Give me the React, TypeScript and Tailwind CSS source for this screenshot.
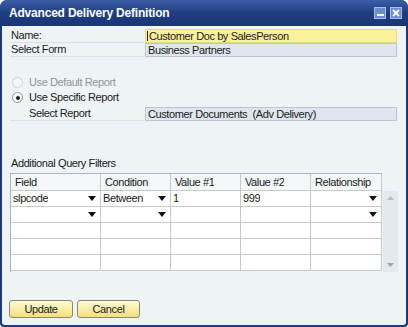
import React from "react";

const Arrow = () => (
  <svg width="8" height="5" viewBox="0 0 8 5" className="shrink-0">
    <polygon points="0,0 8,0 4,5" fill="#111" />
  </svg>
);

const cols = [90, 70, 70, 70, 71];

function Cell({ w, text, arrow, header }: { w: number; text?: string; arrow?: boolean; header?: boolean }) {
  return (
    <div
      style={{ width: w }}
      className={`flex items-center justify-between pl-[2px] pr-[4px] border-r border-b border-[#c4cace] ${header ? "bg-[#f3f7f8] pl-[4px]" : "bg-white"}`}
    >
      <span className="truncate">{text}</span>
      {arrow ? <Arrow /> : null}
    </div>
  );
}

export default function App() {
  const rows: { t: string[]; a: boolean[] }[] = [
    { t: ["slpcode", "Between", "1", "999", ""], a: [true, true, false, false, true] },
    { t: ["", "", "", "", ""], a: [true, true, false, false, true] },
    { t: ["", "", "", "", ""], a: [false, false, false, false, false] },
    { t: ["", "", "", "", ""], a: [false, false, false, false, false] },
    { t: ["", "", "", "", ""], a: [false, false, false, false, false] },
  ];
  return (
    <div className="w-[408px] h-[327px] bg-[#1d3a7c] rounded-t-[7px] rounded-b-[4px] flex flex-col font-['Liberation_Sans',Arial,sans-serif] text-[11px] tracking-[-0.4px] text-[#1a1a1a] overflow-hidden">
      {/* Title bar */}
      <div className="h-[26px] shrink-0 flex items-center justify-between pl-[9px] pr-[6px] bg-gradient-to-b from-[#3c5fa8] via-[#1f3c80] to-[#1a3676]">
        <span className="text-white font-bold text-[12px] tracking-[-0.2px]">Advanced Delivery Definition</span>
        <div className="flex gap-[4px] items-center">
          <div className="w-[12px] h-[12px] bg-[#6c8ccc] border border-[#a9bfe6] flex items-end justify-center pb-[2px]">
            <div className="w-[7px] h-[2px] bg-white" />
          </div>
          <div className="w-[12px] h-[12px] bg-[#6c8ccc] border border-[#a9bfe6] flex items-center justify-center">
            <svg width="8" height="8" viewBox="0 0 8 8">
              <path d="M1 1 L7 7 M7 1 L1 7" stroke="white" strokeWidth="2" />
            </svg>
          </div>
        </div>
      </div>
      {/* Body */}
      <div className="flex-1 mx-[2px] mb-[2px] bg-[#eef4f6] rounded-b-[3px] flex flex-col pt-[3px] pl-[8px] pr-[9px]">
        <div className="flex h-[14px]">
          <div className="flex-1 flex items-center pl-[1px] border-b border-[#d9e1e5] mr-[1px]">Name:</div>
          <div className="w-[252px] bg-[#fbf19b] border border-[#e2d98a] flex items-center pl-[1px] relative">
            <span className="w-px h-[10px] bg-[#222] mr-[1px]" />
            Customer Doc by SalesPerson
          </div>
        </div>
        <div className="flex h-[14px]">
          <div className="flex-1 flex items-center pl-[1px] border-b border-[#d9e1e5] mr-[1px]">Select Form</div>
          <div className="w-[252px] bg-[#dfe6ef] border border-[#bcc6d2] flex items-center pl-[2px]">Business Partners</div>
        </div>

        <div className="mt-[18px] flex items-center h-[15px] text-[#8e9499]">
          <span className="w-[11px] h-[11px] rounded-full border border-[#d0d5d8] bg-[#f4f6f7] ml-[2px] mr-[6px]" />
          Use Default Report
        </div>
        <div className="flex items-center h-[15px]">
          <span className="w-[11px] h-[11px] rounded-full border border-[#8b9196] bg-white ml-[2px] mr-[6px] flex items-center justify-center">
            <span className="w-[4px] h-[4px] rounded-full bg-[#222]" />
          </span>
          Use Specific Report
        </div>
        <div className="flex h-[14px] mt-[2px]">
          <div className="flex-1 flex items-center pl-[19px] border-b border-[#d9e1e5] mr-[1px]">Select Report</div>
          <div className="w-[252px] bg-[#dfe6ef] border border-[#bcc6d2] flex items-center pl-[2px]">Customer Documents&nbsp;&nbsp;(Adv Delivery)</div>
        </div>

        <div className="mt-[36px] h-[12px] flex items-center pl-[1px]">Additional Query Filters</div>

        <div className="mt-[4px] flex">
          <div className="flex flex-col border-l border-t border-[#aab6be]">
            <div className="flex h-[17px]">
              {["Field", "Condition", "Value #1", "Value #2", "Relationship"].map((h, i) => (
                <Cell key={h} w={cols[i]} text={h} header />
              ))}
            </div>
            {rows.map((r, ri) => (
              <div key={ri} className="flex h-[16px]">
                {r.t.map((t, i) => (
                  <Cell key={i} w={cols[i]} text={t} arrow={r.a[i]} />
                ))}
              </div>
            ))}
          </div>
          <div className="pt-[18px] ml-[1px]">
            <div className="w-[15px] h-[81px] bg-[#e3eaef] flex flex-col justify-between items-center py-[5px]">
              <svg width="7" height="4" viewBox="0 0 7 4"><polygon points="0,4 7,4 3.5,0" fill="#b3bcc3" /></svg>
              <svg width="7" height="4" viewBox="0 0 7 4"><polygon points="0,0 7,0 3.5,4" fill="#9aa4ab" /></svg>
            </div>
          </div>
        </div>

        <div className="mt-[28px] flex gap-[4px] -ml-[1px]">
          <button className="w-[64px] h-[18px] rounded-[3px] border border-[#8c8a6c] bg-gradient-to-b from-[#fffbd6] to-[#f4df78] flex items-center justify-center">Update</button>
          <button className="w-[63px] h-[18px] rounded-[3px] border border-[#8c8a6c] bg-gradient-to-b from-[#fffbd6] to-[#f4df78] flex items-center justify-center">Cancel</button>
        </div>
      </div>
    </div>
  );
}
